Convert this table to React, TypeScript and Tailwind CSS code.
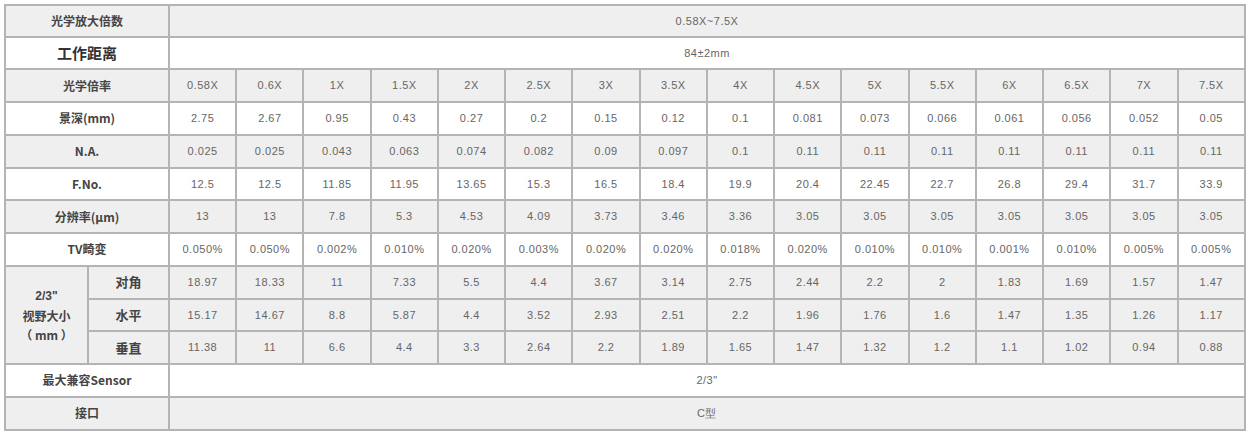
import React from "react";

const mags = ["0.58X", "0.6X", "1X", "1.5X", "2X", "2.5X", "3X", "3.5X", "4X", "4.5X", "5X", "5.5X", "6X", "6.5X", "7X", "7.5X"];

type Row = { label: string; values: string[]; gray: boolean };

const rows: Row[] = [
  { label: "景深(mm)", gray: false, values: ["2.75", "2.67", "0.95", "0.43", "0.27", "0.2", "0.15", "0.12", "0.1", "0.081", "0.073", "0.066", "0.061", "0.056", "0.052", "0.05"] },
  { label: "N.A.", gray: true, values: ["0.025", "0.025", "0.043", "0.063", "0.074", "0.082", "0.09", "0.097", "0.1", "0.11", "0.11", "0.11", "0.11", "0.11", "0.11", "0.11"] },
  { label: "F.No.", gray: false, values: ["12.5", "12.5", "11.85", "11.95", "13.65", "15.3", "16.5", "18.4", "19.9", "20.4", "22.45", "22.7", "26.8", "29.4", "31.7", "33.9"] },
  { label: "分辨率(μm)", gray: true, values: ["13", "13", "7.8", "5.3", "4.53", "4.09", "3.73", "3.46", "3.36", "3.05", "3.05", "3.05", "3.05", "3.05", "3.05", "3.05"] },
  { label: "TV畸变", gray: false, values: ["0.050%", "0.050%", "0.002%", "0.010%", "0.020%", "0.003%", "0.020%", "0.020%", "0.018%", "0.020%", "0.010%", "0.010%", "0.001%", "0.010%", "0.005%", "0.005%"] },
];

const fov = [
  { label: "对角", values: ["18.97", "18.33", "11", "7.33", "5.5", "4.4", "3.67", "3.14", "2.75", "2.44", "2.2", "2", "1.83", "1.69", "1.57", "1.47"] },
  { label: "水平", values: ["15.17", "14.67", "8.8", "5.87", "4.4", "3.52", "2.93", "2.51", "2.2", "1.96", "1.76", "1.6", "1.47", "1.35", "1.26", "1.17"] },
  { label: "垂直", values: ["11.38", "11", "6.6", "4.4", "3.3", "2.64", "2.2", "1.89", "1.65", "1.47", "1.32", "1.2", "1.1", "1.02", "0.94", "0.88"] },
];

const cell = "border-2 border-[#b4b4b4] text-center align-middle p-0";
const label = `${cell} font-bold text-[12px] text-[#444]`;
const val = `${cell} text-[11px] text-[#666] tracking-[0.5px] font-['Liberation_Sans',sans-serif]`;
const rowH = "h-[32.75px]";

export default function App() {
  return (
    <div className="pl-[4px] pt-[4px] bg-white w-[1250px] h-[434px] font-['Noto_Sans_CJK_SC',sans-serif]">
      <table className="w-[1242px] table-fixed border-collapse">
        <colgroup>
          <col className="w-[83px]" />
          <col className="w-[81px]" />
          {mags.map((m) => (
            <col key={m} />
          ))}
        </colgroup>
        <tbody>
          <tr className="h-[31.5px] bg-[#efefef]">
            <td colSpan={2} className={label}>光学放大倍数</td>
            <td colSpan={16} className={val}>0.58X~7.5X</td>
          </tr>
          <tr className={`${rowH} bg-white`}>
            <td colSpan={2} className={`${cell} font-bold text-[15px] text-[#333]`}>工作距离</td>
            <td colSpan={16} className={val}>84±2mm</td>
          </tr>
          <tr className={`${rowH} bg-[#efefef]`}>
            <td colSpan={2} className={label}>光学倍率</td>
            {mags.map((m) => (
              <td key={m} className={val}>{m}</td>
            ))}
          </tr>
          {rows.map((r) => (
            <tr key={r.label} className={`${rowH} ${r.gray ? "bg-[#efefef]" : "bg-white"}`}>
              <td colSpan={2} className={label}>{r.label}</td>
              {r.values.map((v, i) => (
                <td key={i} className={val}>{v}</td>
              ))}
            </tr>
          ))}
          {fov.map((r, idx) => (
            <tr key={r.label} className={`${rowH} bg-[#efefef]`}>
              {idx === 0 && (
                <td rowSpan={3} className={`${label} leading-[19px]`}>
                  <span className="font-['Liberation_Sans',sans-serif]">2/3"</span>
                  <br />
                  视野大小
                  <br />（ mm ）
                </td>
              )}
              <td className={`${cell} font-bold text-[13px] text-[#444]`}>{r.label}</td>
              {r.values.map((v, i) => (
                <td key={i} className={val}>{v}</td>
              ))}
            </tr>
          ))}
          <tr className={`${rowH} bg-white`}>
            <td colSpan={2} className={label}>最大兼容Sensor</td>
            <td colSpan={16} className={val}>2/3"</td>
          </tr>
          <tr className={`${rowH} bg-[#efefef]`}>
            <td colSpan={2} className={label}>接口</td>
            <td colSpan={16} className={val}>C型</td>
          </tr>
        </tbody>
      </table>
    </div>
  );
}
